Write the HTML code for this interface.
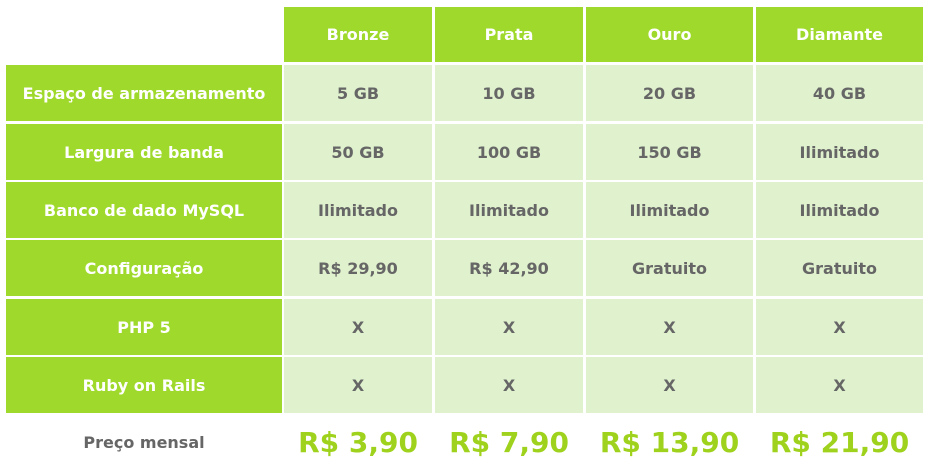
<!DOCTYPE html><html><head><style>
body{margin:0;width:930px;height:466px;background:#fff;font-family:"DejaVu Sans",sans-serif;font-weight:bold;position:relative;overflow:hidden}
.c{position:absolute;display:flex;align-items:center;justify-content:center;text-align:center}
.g{background:#9fd92b;color:#fff;font-size:16px}
.d{background:#dff1cd;color:#666;font-size:16px}
.p{color:#9fd21c;font-size:28px}
</style></head><body>
<div id="t"></div>
<script>
var xs=[[6,276],[284,148],[435,148],[586,167],[756,167]];
var ys=[65,124,182,240,299,357];
var hd=["Bronze","Prata","Ouro","Diamante"];
var rows=[["Espaço de armazenamento","5 GB","10 GB","20 GB","40 GB"],
["Largura de banda","50 GB","100 GB","150 GB","Ilimitado"],
["Banco de dado MySQL","Ilimitado","Ilimitado","Ilimitado","Ilimitado"],
["Configuração","R$ 29,90","R$ 42,90","Gratuito","Gratuito"],
["PHP 5","X","X","X","X"],["Ruby on Rails","X","X","X","X"]];
var pr=["Preço mensal","R$ 3,90","R$ 7,90","R$ 13,90","R$ 21,90"];
var h="";
for(var i=0;i<4;i++)h+='<div class="c g" style="left:'+xs[i+1][0]+'px;top:7px;width:'+xs[i+1][1]+'px;height:55px">'+hd[i]+'</div>';
for(var r=0;r<6;r++)for(var c=0;c<5;c++)h+='<div class="c '+(c?'d':'g')+'" style="left:'+xs[c][0]+'px;top:'+ys[r]+'px;width:'+xs[c][1]+'px;height:56px">'+rows[r][c]+'</div>';
for(var c=0;c<5;c++)h+='<div class="c '+(c?'p':'')+'" style="left:'+xs[c][0]+'px;top:416px;width:'+xs[c][1]+'px;height:52px;'+(c?'':'color:#666;font-size:16px')+'">'+pr[c]+'</div>';
document.getElementById("t").innerHTML=h;
</script>
</body></html>
